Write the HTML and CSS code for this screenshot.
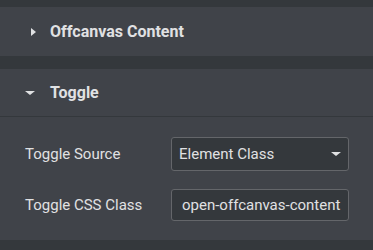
FILE: index.html
```html
<!DOCTYPE html>
<html>
<head>
	<title>Offcanvas Controls</title>
	<link rel="stylesheet" href="styles.css">
</head>
<body>
	<div class="panel">
		<div class="section">
			<div class="section-head">
				<span class="caret right"></span>
				<span class="title">Offcanvas Content</span>
			</div>
		</div>
		<div class="section open">
			<div class="section-head">
				<span class="caret down"></span>
				<span class="title">Toggle</span>
			</div>
			<div class="section-body">
				<div class="control">
					<label>Toggle Source</label>
					<div class="select">
						<span>Element Class</span>
						<span class="select-caret"></span>
					</div>
				</div>
				<div class="control">
					<label>Toggle CSS Class</label>
					<input class="text-input" type="text" value="open-offcanvas-content">
				</div>
			</div>
		</div>
	</div>
</body>
</html>
```

FILE: styles.css
```css
* {
	box-sizing: border-box;
}
body {
	margin: 0;
	background: #34383c;
	font-family: Roboto, "Liberation Sans", sans-serif;
	color: #e0e1e3;
}
.panel {
	padding-top: 7px;
	display: flex;
	flex-direction: column;
	gap: 13px;
}
.section {
	background: #404349;
}
.section-head {
	height: 49px;
	display: flex;
	align-items: center;
	padding-left: 25px;
}
.section.open .section-head {
	height: 48px;
	border-bottom: 1px solid #34383c;
}
.title {
	font-size: 16px;
	font-weight: bold;
}
.caret {
	width: 0;
	height: 0;
	margin-right: 15px;
}
.caret.right {
	margin-left: 6px;
	border-top: 4.5px solid transparent;
	border-bottom: 4.5px solid transparent;
	border-left: 5px solid #e0e1e3;
	margin-right: 14px;
}
.caret.down {
	border-left: 5px solid transparent;
	border-right: 5px solid transparent;
	border-top: 4px solid #e0e1e3;
}
.section-body {
	padding: 20px 24px 18px 25px;
	display: flex;
	flex-direction: column;
	gap: 18px;
	height: 123px;
}
.control {
	display: flex;
	align-items: center;
	justify-content: space-between;
}
.control label {
	font-size: 15px;
}
.select, .text-input {
	width: 178px;
	background: #34383c;
	border: 1px solid #64666a;
	border-radius: 3px;
	color: #e0e1e3;
	font-family: Roboto, "Liberation Sans", sans-serif;
	font-size: 15px;
}
.select {
	height: 34px;
	display: flex;
	align-items: center;
	justify-content: space-between;
	padding: 0 7px 0 7px;
}
.select-caret {
	width: 0;
	height: 0;
	border-left: 5px solid transparent;
	border-right: 5px solid transparent;
	border-top: 4px solid #e0e1e3;
}
.text-input {
	height: 32px;
	padding: 0 2px 0 10px;
	outline: none;
}
```
